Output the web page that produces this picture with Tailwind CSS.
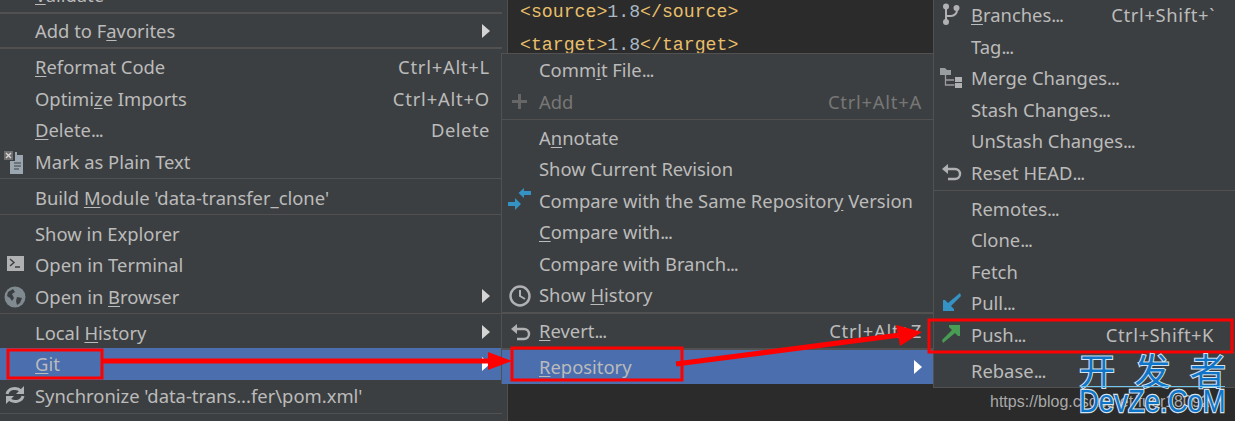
<!DOCTYPE html>
<html lang="en">

<head>
    <meta charset="UTF-8" />
    <title>Git menu</title>
    <script src="https://cdn.jsdelivr.net/npm/@tailwindcss/browser@4"></script>
</head>

<body class="bg-[#2b2b2b] overflow-hidden font-['Noto_Sans','Noto_Sans_CJK_SC',sans-serif] text-[18.4px] text-[#bbbbbb]">
    <div class="relative w-[1235px] h-[421px] overflow-hidden">

        <!-- Editor code behind the menus -->
        <div class="absolute left-[520px] top-[1px] flex flex-col gap-[10.5px] font-['Liberation_Mono',monospace] text-[18.2px] leading-[22px] text-[#a9b7c6]">
            <div><span class="text-[#e8bf6a]">&lt;source&gt;</span>1.8<span class="text-[#e8bf6a]">&lt;/source&gt;</span></div>
            <div><span class="text-[#e8bf6a]">&lt;target&gt;</span>1.8<span class="text-[#e8bf6a]">&lt;/target&gt;</span></div>
        </div>

        <!-- Main context menu -->
        <div class="absolute left-0 top-[-20.8px] w-[502px] bg-[#3c3f41]">
            <div class="h-[31.5px] flex items-center pl-[35px]"><span><u class="underline-offset-2">V</u>alidate</span></div>
            <div class="h-[2px] bg-[#515151] mt-[1px] mb-[1.5px]"></div>
            <div class="h-[31.5px] flex items-center justify-between pl-[35px] pr-[11px]"><span>Add to F<u class="underline-offset-2">a</u>vorites</span><svg width="10" height="14" viewBox="0 0 10 14"><path d="M1 0l8 7-8 7z" fill="#d4d4d4" /></svg></div>
            <div class="h-[2px] bg-[#515151] mt-[0.5px] mb-[2px]"></div>
            <div class="h-[31.5px] flex items-center justify-between pl-[35px] pr-[12px]"><span><u class="underline-offset-2">R</u>eformat Code</span><span class="tracking-[0.75px]">Ctrl+Alt+L</span></div>
            <div class="h-[31.5px] flex items-center justify-between pl-[35px] pr-[12px]"><span>Optimi<u class="underline-offset-2">z</u>e Imports</span><span class="tracking-[0.8px]">Ctrl+Alt+O</span></div>
            <div class="h-[31.5px] flex items-center justify-between pl-[35px] pr-[12px]"><span><u class="underline-offset-2">D</u>elete<span class="tracking-[-1px]">...</span></span><span class="tracking-[0.5px]">Delete</span></div>
            <div class="relative h-[31.5px] flex items-center pl-[35px]">
                <svg class="absolute left-[3px] top-[4px]" width="21" height="24" viewBox="0 0 21 24">
                    <path d="M7 2h7v3h6v19H7z" fill="#9aa7b0" />
                    <path d="M0 0h12v11H0z" fill="#3c3f41" />
                    <path d="M1 1h9v9H1z" fill="#6e6e6e" />
                    <path d="M3 3l5 5M8 3l-5 5" stroke="#d8d8d8" stroke-width="1.3" />
                    <path d="M11 13h7M11 16h7M11 19h5" stroke="#3c3f41" stroke-width="1.2" />
                </svg>
                <span>Mark as Plain Text</span>
            </div>
            <div class="h-[1px] bg-[#515151] mt-[1px] mb-[2.500px]"></div>
            <div class="h-[31.5px] flex items-center pl-[35px]"><span>Build <u class="underline-offset-2">M</u>odule 'data-transfer_clone'</span></div>
            <div class="h-[1px] bg-[#515151] mt-[1px] mb-[2.500px]"></div>
            <div class="h-[31.5px] flex items-center pl-[35px]"><span>Show in Explorer</span></div>
            <div class="relative h-[31.5px] flex items-center pl-[35px]">
                <svg class="absolute left-[7px] top-[6px]" width="17" height="17" viewBox="0 0 17 17">
                    <path d="M0 1h17v15H0z" fill="#afb1b3" />
                    <path d="M3 4l4 3.5-4 3.5M8 12h5" fill="none" stroke="#3c3f41" stroke-width="1.4" />
                </svg>
                <span>Open in Terminal</span>
            </div>
            <div class="relative h-[31.5px] flex items-center justify-between pl-[35px] pr-[11px]">
                <svg class="absolute left-[4px] top-[5px]" width="22" height="22" viewBox="0 0 22 22">
                    <circle cx="11" cy="11" r="10.5" fill="#7f8b91" />
                    <path d="M4 6l5-3 2 3-3 2 2 4-2 3-2-3-3-2zM13 11l5 1-2 5-3 2-1-4z" fill="#3c3f41" />
                </svg>
                <span>Open in <u class="underline-offset-2">B</u>rowser</span><svg width="10" height="14" viewBox="0 0 10 14"><path d="M1 0l8 7-8 7z" fill="#d4d4d4" /></svg>
            </div>
            <div class="h-[1px] bg-[#515151] mt-[1px] mb-[2.500px]"></div>
            <div class="h-[31.4px] flex items-center justify-between pl-[35px] pr-[11px]"><span>Local <u class="underline-offset-2">H</u>istory</span><svg width="10" height="14" viewBox="0 0 10 14"><path d="M1 0l8 7-8 7z" fill="#d4d4d4" /></svg></div>
            <div class="h-[32px] flex items-center justify-between pl-[35px] pr-[11px] bg-[#4b6eaf]"><span><u class="underline-offset-2">G</u>it</span><svg width="10" height="14" viewBox="0 0 10 14"><path d="M1 0l8 7-8 7z" fill="#ffffff" /></svg></div>
            <div class="relative h-[31.5px] flex items-center pl-[35px]">
                <svg class="absolute left-[5px] top-[5px]" width="20" height="20" viewBox="0 0 20 20" fill="none" stroke="#afb1b3" stroke-width="3">
                    <path d="M2 9a8 7 0 0 1 14-3" />
                    <path d="M18 11a8 7 0 0 1-14 3" />
                    <path d="M19 1v8h-8z" fill="#afb1b3" stroke="none" />
                    <path d="M1 19v-8h8z" fill="#afb1b3" stroke="none" />
                </svg>
                <span>Synchronize 'data-trans...fer\pom.xml'</span>
            </div>
            <div class="h-[1px] bg-[#515151] mt-[1px] mb-[2.500px]"></div>
            <div class="h-[20px]"></div>
        </div>
        <!-- strip of the main menu's right edge -->
        <div class="absolute left-[502px] top-0 w-[6px] h-[421px] bg-[#3c3f41] border-r border-[#515151]"></div>

        <!-- Git submenu -->
        <div class="absolute left-[501px] top-[53px] w-[433px] h-[331px] pt-[0.5px] bg-[#3c3f41] border border-[#515151]">
            <div class="h-[31.5px] flex items-center pl-[37px]"><span>Comm<u class="underline-offset-2">i</u>t File<span class="tracking-[-1px]">...</span></span></div>
            <div class="relative h-[31.5px] flex items-center justify-between pl-[37px] pr-[11px] text-[#777777]">
                <svg class="absolute left-[10px] top-[8px]" width="15" height="15" viewBox="0 0 15 15">
                    <path d="M6 0h3v6h6v3H9v6H6V9H0V6h6z" fill="#666666" />
                </svg>
                <span>Add</span><span class="tracking-[0.75px]">Ctrl+Alt+A</span>
            </div>
            <div class="h-[1px] bg-[#515151] mt-[1.5px] mb-[2px]"></div>
            <div class="h-[31.5px] flex items-center pl-[37px]"><span>A<u class="underline-offset-2">n</u>notate</span></div>
            <div class="h-[31.5px] flex items-center pl-[37px]"><span>Show Current Revision</span></div>
            <div class="relative h-[31.5px] flex items-center pl-[37px]">
                <svg class="absolute left-[6px] top-[3px]" width="24" height="23" viewBox="0 0 24 23">
                    <path d="M10.500 5L16 0v3h7v4h-7v3z" fill="#3592c4" />
                    <path d="M0 14h7v-4l6 6-6 6v-4H0z" fill="#3592c4" />
                </svg>
                <span>Compare with the Same Repositor<u class="underline-offset-2">y</u> Version</span>
            </div>
            <div class="h-[31.5px] flex items-center pl-[37px]"><span><u class="underline-offset-2">C</u>ompare with<span class="tracking-[-1px]">...</span></span></div>
            <div class="h-[31.5px] flex items-center pl-[37px]"><span>Compare with Branch<span class="tracking-[-1px]">...</span></span></div>
            <div class="relative h-[31.5px] flex items-center pl-[37px]">
                <svg class="absolute left-[7px] top-[5px]" width="22" height="22" viewBox="0 0 22 22" fill="none" stroke="#afb1b3" stroke-width="2.4">
                    <circle cx="11" cy="11" r="9.5" />
                    <path d="M11 5v6l5 3" stroke-width="2" />
                </svg>
                <span>Show <u class="underline-offset-2">H</u>istory</span>
            </div>
            <div class="h-[2px] bg-[#515151] mt-[1px] mb-[1.5px]"></div>
            <div class="relative h-[31.5px] flex items-center justify-between pl-[37px] pr-[11px]">
                <svg class="absolute left-[9px] top-[7px]" width="20" height="18" viewBox="0 0 20 18" fill="none" stroke="#afb1b3" stroke-width="2.4">
                    <path d="M4 6h9a5 5 0 0 1 0 10H6" />
                    <path d="M0 6l6-5v10z" fill="#afb1b3" stroke="none" />
                </svg>
                <span><u class="underline-offset-2">R</u>evert<span class="tracking-[-1px]">...</span></span><span class="tracking-[0.75px]">Ctrl+Alt+Z</span>
            </div>
            <div class="h-[2px] bg-[#515151] mt-[1px]"></div>
            <div class="h-[34px] flex items-center justify-between pl-[37px] pr-[10px] bg-[#4b6eaf]"><span><u class="underline-offset-2">R</u>epository</span><svg width="10" height="14" viewBox="0 0 10 14"><path d="M1 0l8 7-8 7z" fill="#ffffff" /></svg></div>
        </div>

        <!-- Repository submenu -->
        <div class="absolute left-[933px] top-[-0.8px] w-[302px] h-[388.8px] bg-[#3c3f41] border-l border-b border-[#515151]">
            <div class="relative h-[31.5px] flex items-center justify-between pl-[37px] pr-[20px]">
                <svg class="absolute left-[8px] top-[4px]" width="18" height="22" viewBox="0 0 18 22" fill="#afb1b3">
                    <circle cx="4" cy="3.5" r="3" />
                    <circle cx="4" cy="19" r="3" />
                    <circle cx="14.5" cy="5" r="3" />
                    <path d="M3 4h2v14H3z" />
                    <path d="M5 12h4a5 5 0 0 0 5-5h2a7 7 0 0 1-7 7H5z" />
                </svg>
                <span><u class="underline-offset-2">B</u>ranches<span class="tracking-[-1px]">...</span></span><span class="tracking-[0.65px]">Ctrl+Shift+`</span>
            </div>
            <div class="h-[31.5px] flex items-center pl-[37px]"><span>Tag<span class="tracking-[-1px]">...</span></span></div>
            <div class="relative h-[31.5px] flex items-center pl-[37px]">
                <svg class="absolute left-[6px] top-[5px]" width="22" height="22" viewBox="0 0 22 22">
                    <path d="M0 1h5l2 2h4v5H0z" fill="#9a9d9f" />
                    <path d="M5.500 8v10h9M6 13h8" fill="none" stroke="#9a9d9f" stroke-width="1.3" />
                    <path d="M15 10h7v5h-7zM15 16h7v5h-7z" fill="#afb1b3" />
                </svg>
                <span>Merge Changes<span class="tracking-[-1px]">...</span></span>
            </div>
            <div class="h-[31.5px] flex items-center pl-[37px]"><span>Stash Changes<span class="tracking-[-1px]">...</span></span></div>
            <div class="h-[31.5px] flex items-center pl-[37px]"><span>UnStash Changes<span class="tracking-[-1px]">...</span></span></div>
            <div class="relative h-[31.5px] flex items-center pl-[37px]">
                <svg class="absolute left-[8px] top-[6px]" width="20" height="18" viewBox="0 0 20 18" fill="none" stroke="#afb1b3" stroke-width="2.4">
                    <path d="M4 6h9a5 5 0 0 1 0 10H6" />
                    <path d="M0 6l6-5v10z" fill="#afb1b3" stroke="none" />
                </svg>
                <span>Reset HEAD<span class="tracking-[-1px]">...</span></span>
            </div>
            <div class="h-[1px] bg-[#515151] mt-[1.5px] mb-[2px]"></div>
            <div class="h-[31.5px] flex items-center pl-[37px]"><span>Remotes<span class="tracking-[-1px]">...</span></span></div>
            <div class="h-[31.5px] flex items-center pl-[37px]"><span>Clone<span class="tracking-[-1px]">...</span></span></div>
            <div class="h-[31.5px] flex items-center pl-[37px]"><span>Fetch</span></div>
            <div class="relative h-[31.5px] flex items-center pl-[37px]">
                <svg class="absolute left-[9px] top-[6px]" width="18" height="18" viewBox="0 0 18 18">
                    <path d="M17 0l1 3L8 13l3 3v2H0V7h2l3 3z" fill="#3592c4" />
                </svg>
                <span>Pull<span class="tracking-[-1px]">...</span></span>
            </div>
            <div class="relative h-[31.5px] flex items-center justify-between pl-[37px] pr-[21px]">
                <svg class="absolute left-[8px] top-[6px]" width="18" height="18" viewBox="0 0 18 18">
                    <path d="M1 18l-1-3L10 5 7 2V0h11v11h-2l-3-3z" fill="#499c54" />
                </svg>
                <span>Push<span class="tracking-[-1px]">...</span></span><span class="tracking-[0.5px]">Ctrl+Shift+K</span>
            </div>
            <div class="h-[1px] bg-[#515151] mt-[2px] mb-[2px]"></div>
            <div class="h-[31.5px] flex items-center pl-[37px]"><span>Rebase<span class="tracking-[-1px]">...</span></span></div>
        </div>

        <!-- Red annotations -->
        <svg class="absolute inset-0" width="1235" height="421" viewBox="0 0 1235 421" fill="none">
            <rect x="8" y="350" width="94" height="28" stroke="#ff0000" stroke-width="3" />
            <rect x="512" y="348" width="170" height="32" stroke="#ff0000" stroke-width="3" />
            <rect x="929" y="320" width="303" height="32" stroke="#ff0000" stroke-width="3" />
            <path d="M102 361H496" stroke="#ff0000" stroke-width="5" />
            <path d="M488 352l24 9-24 9z" fill="#ff0000" />
            <path d="M676 364L900 335" stroke="#ff0000" stroke-width="5" />
            <path d="M896 325l26 7-22 14z" fill="#ff0000" />
        </svg>

        <!-- Watermark -->
        <div class="absolute left-[990px] top-[391px] font-['Liberation_Sans',sans-serif] text-[16px] leading-[22px] text-[#a9a9a9]">https://blog.csdn.net/fuer18092</div>
        <div class="absolute left-[1079px] top-[352px] w-[147px] flex justify-between font-['Noto_Sans_CJK_SC',sans-serif] text-[36px] leading-[34px] text-[#0f75c8] [paint-order:stroke_fill] [-webkit-text-stroke:2px_#d5e3ee]">
            <span>开</span><span>发</span><span>者</span>
        </div>
        <div class="absolute left-[1080px] top-[386px] w-[145px] h-[1px] bg-[#6ec6ee]"></div>
        <div class="absolute left-[1079px] top-[386px] font-['Liberation_Sans',sans-serif] text-[27.5px] leading-[28px] text-[#0f75c8] scale-y-[1.15] origin-top [paint-order:stroke_fill] [-webkit-text-stroke:2px_#d5e3ee] whitespace-nowrap">DevZe.CoM</div>
    </div>
</body>

</html>
